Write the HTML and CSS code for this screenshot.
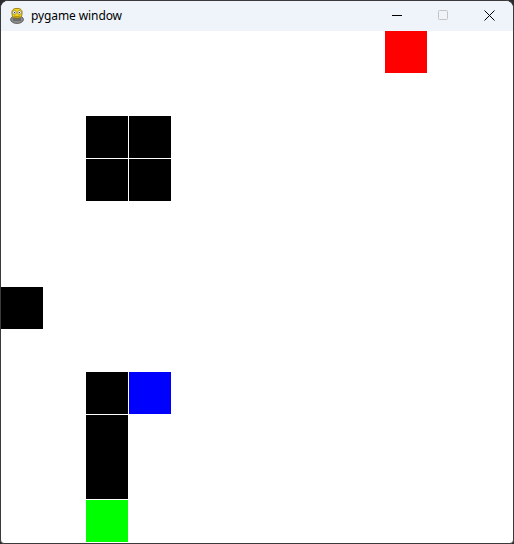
FILE: index.html
```html
<!DOCTYPE html>
<html>
<head>
<meta charset="utf-8">
<link rel="stylesheet" href="styles.css">
</head>
<body>
<div class="window">
  <div class="titlebar">
    <svg class="appicon" width="16" height="18" viewBox="0 0 16 18">
      <ellipse cx="8" cy="12.5" rx="6.5" ry="4" fill="#8a8a8a" stroke="#555" stroke-width="0.8"/>
      <rect x="4" y="11" width="8" height="3" fill="#6d6d6d"/>
      <path d="M3 7 C2 3 5 1 8 1.5 C11 1 14 3 13 7 C13 10 11 11 8 11 C5 11 3 10 3 7 Z" fill="#f2d21b" stroke="#8a7000" stroke-width="0.8"/>
      <circle cx="5.5" cy="5.5" r="1.8" fill="#fff" stroke="#555" stroke-width="0.5"/>
      <circle cx="10.5" cy="5.5" r="1.8" fill="#fff" stroke="#555" stroke-width="0.5"/>
      <circle cx="5.6" cy="5.6" r="0.7" fill="#222"/>
      <circle cx="10.4" cy="5.6" r="0.7" fill="#222"/>
      <path d="M5 9 Q8 10.5 11 9" stroke="#8a7000" stroke-width="0.7" fill="none"/>
    </svg>
    <span class="title">pygame window</span>
    <div class="controls">
      <div class="ctl min"><svg width="10" height="10" viewBox="0 0 10 10"><path d="M0 5.5 H10" stroke="#000" stroke-width="1"/></svg></div>
      <div class="ctl max"><svg width="10" height="10" viewBox="0 0 10 10"><rect x="0.5" y="0.5" width="9" height="9" rx="1" fill="none" stroke="#c4c4c4" stroke-width="1"/></svg></div>
      <div class="ctl close"><svg width="11" height="11" viewBox="0 0 11 11"><path d="M0.5 0.5 L10.5 10.5 M10.5 0.5 L0.5 10.5" stroke="#000" stroke-width="1"/></svg></div>
    </div>
  </div>
  <div class="board">
    <div class="cell red" style="grid-column: 10; grid-row: 1;"></div>
    <div class="cell black" style="grid-column: 3; grid-row: 3;"></div>
    <div class="cell black" style="grid-column: 4; grid-row: 3;"></div>
    <div class="cell black" style="grid-column: 3; grid-row: 4;"></div>
    <div class="cell black" style="grid-column: 4; grid-row: 4;"></div>
    <div class="cell black" style="grid-column: 1; grid-row: 7;"></div>
    <div class="cell black" style="grid-column: 3; grid-row: 9;"></div>
    <div class="cell blue" style="grid-column: 4; grid-row: 9;"></div>
    <div class="cell black tall" style="grid-column: 3; grid-row: 10 / span 2;"></div>
    <div class="cell green" style="grid-column: 3; grid-row: 12;"></div>
  </div>
</div>
</body>
</html>
```
FILE: styles.css
```css
html, body {
  margin: 0;
  padding: 0;
  background: #2a2c30;
  width: 514px;
  height: 544px;
  overflow: hidden;
}
.window {
  width: 512px;
  height: 542px;
  border: 1px solid #3a3a3a;
  border-radius: 8px 8px 4px 4px;
  overflow: hidden;
  background: #ffffff;
  display: flex;
  flex-direction: column;
}
.titlebar {
  height: 30px;
  background: #eef4f9;
  display: flex;
  align-items: center;
  flex: none;
}
.appicon {
  margin-left: 8px;
  margin-top: -1px;
}
.title {
  margin-left: 6px;
  font-family: "Noto Sans", "Open Sans", sans-serif;
  font-size: 12px;
  color: #000;
  letter-spacing: -0.1px;
  margin-top: -1px;
}
.controls {
  margin-left: auto;
  display: flex;
  height: 30px;
}
.ctl {
  width: 46px;
  height: 30px;
  display: flex;
  align-items: center;
  justify-content: center;
}
.ctl svg { display: block; }
.min { margin-top: -1px; }
.max { margin-top: -1px; }
.close { width: 47px; margin-top: -1px; }
.board {
  width: 512px;
  height: 512px;
  display: grid;
  grid-template-columns: repeat(12, 1fr);
  grid-template-rows: repeat(12, 1fr);
}
.cell {
  width: 42px;
  height: 42px;
}
.cell.tall { height: 84px; }
.black { background: #000000; }
.red { background: #ff0000; }
.blue { background: #0000ff; }
.green { background: #00ff00; }
```
